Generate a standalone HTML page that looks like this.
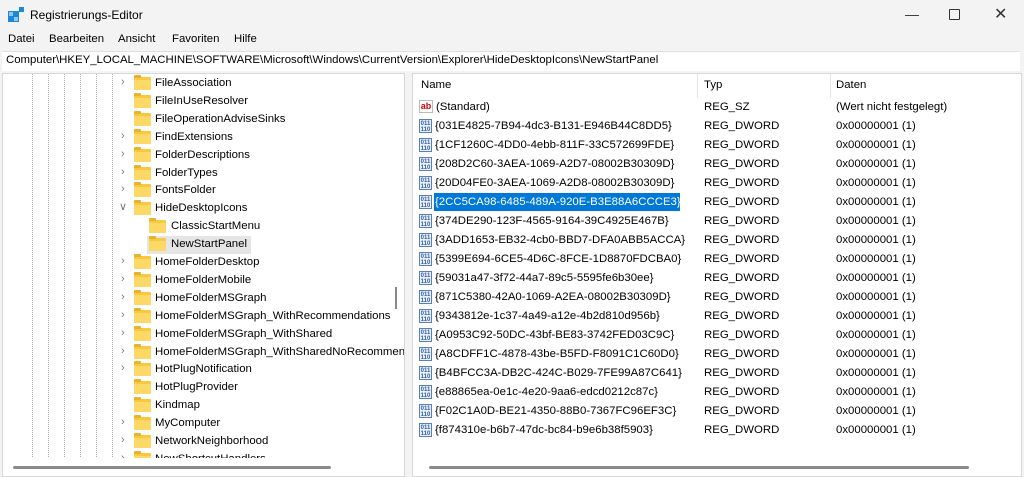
<!DOCTYPE html>
<html><head><meta charset="utf-8"><style>
*{margin:0;padding:0;box-sizing:border-box}
body{width:1024px;height:477px;overflow:hidden;background:#f3f3f3;font-family:"Segoe UI","Liberation Sans",sans-serif;font-size:11.4px;color:#000;position:relative}
.abs{position:absolute;white-space:nowrap}
.title{left:0;top:0;width:1024px;height:31px;background:#f3f3f3}
.menu span{position:absolute;top:33px}
.addr{left:2px;top:51px;width:1018px;height:20px;background:#fff;border-top:1px solid #e0e0e0;padding:2px 4px}
.lp{left:2px;top:73px;width:403px;height:404px;background:#fff;border:1px solid #d8d8d8;overflow:hidden}
.rp{left:412px;top:73px;width:610px;height:404px;background:#fff;border:1px solid #d8d8d8;overflow:hidden}
.fold{position:absolute;width:17px;height:13px;background:#f8c93e;border-radius:1px}
.fold:before{content:"";position:absolute;left:0;top:-2px;width:7px;height:3px;background:#e8b32a;border-radius:1px 1px 0 0}
.fold:after{content:"";position:absolute;left:0;top:3px;width:17px;height:10px;background:#fcd867}
.arr{position:absolute;color:#777;font-size:11px}
.row{position:absolute;height:18px;line-height:18px}
.ic{position:absolute;width:13px;height:14px;border:1px solid #5a7fb8;background:#eaf1fb;font-size:6px;line-height:6px;color:#2f5fa8;text-align:center;font-weight:bold;padding-top:1px}
.dots{position:absolute;border-left:1px dotted #aaa}
</style></head><body>
<div class="abs title"></div>
<svg class="abs" style="left:8px;top:7px" width="16" height="16"><rect x="0" y="4" width="11" height="11" fill="#1e88d8"/><g fill="#8fc8f3"><rect x="1" y="5" width="4" height="4"/><rect x="6" y="10" width="4" height="4"/></g><rect x="11" y="0" width="5" height="5" fill="#1e88d8"/></svg>
<div class="abs" style="left:30px;top:8px;font-size:12px">Registrierungs-Editor</div>
<div class="abs" style="left:905px;top:6px;font-size:14px;color:#333">&#8212;</div>
<div class="abs" style="left:949px;top:9px;width:11px;height:11px;border:1px solid #333;border-radius:1px"></div>
<div class="abs" style="left:994px;top:4px;font-size:16px;color:#333">&#x2715;</div>
<div class="menu"><span style="left:8px">Datei</span><span style="left:49px">Bearbeiten</span><span style="left:118px">Ansicht</span><span style="left:172px">Favoriten</span><span style="left:234px">Hilfe</span></div>
<div class="abs addr">Computer\HKEY_LOCAL_MACHINE\SOFTWARE\Microsoft\Windows\CurrentVersion\Explorer\HideDesktopIcons\NewStartPanel</div>
<div class="abs lp">
<div class="dots" style="left:29px;top:0;height:385px"></div>
<div class="dots" style="left:45px;top:0;height:385px"></div>
<div class="dots" style="left:61px;top:0;height:385px"></div>
<div class="dots" style="left:77px;top:0;height:385px"></div>
<div class="dots" style="left:93px;top:0;height:385px"></div>
<div class="dots" style="left:109px;top:0;height:385px"></div>
<div class="abs" style="left:144px;top:162px;width:104px;height:18px;background:#e5e5e5"></div>
<div id="tree"></div>
<div class="abs" style="left:392px;top:213px;width:2px;height:22px;background:#888"></div>
<div class="abs" style="left:0;top:384px;width:401px;height:20px;background:#fff"></div>
<div class="abs" style="left:10px;top:392px;width:318px;height:3px;background:#8a8a8a;border-radius:2px"></div>
</div>
<div class="abs rp">
<div class="abs" style="left:284px;top:0;width:1px;height:24px;background:#e5e5e5"></div>
<div class="abs" style="left:417px;top:0;width:1px;height:24px;background:#e5e5e5"></div>
<div class="abs" style="left:8px;top:5px">Name</div>
<div class="abs" style="left:291px;top:5px">Typ</div>
<div class="abs" style="left:423px;top:5px">Daten</div>
<div id="vals"></div>
<div class="abs" style="left:16px;top:392px;width:540px;height:3px;background:#8a8a8a;border-radius:2px"></div>
</div>
<script>
var t=[["FileAssociation",1,1],["FileInUseResolver",1,0],["FileOperationAdviseSinks",1,0],["FindExtensions",1,1],["FolderDescriptions",1,1],["FolderTypes",1,1],["FontsFolder",1,1],["HideDesktopIcons",1,2],["ClassicStartMenu",2,0],["NewStartPanel",2,0],["HomeFolderDesktop",1,1],["HomeFolderMobile",1,1],["HomeFolderMSGraph",1,1],["HomeFolderMSGraph_WithRecommendations",1,1],["HomeFolderMSGraph_WithShared",1,1],["HomeFolderMSGraph_WithSharedNoRecommendations",1,1],["HotPlugNotification",1,1],["HotPlugProvider",1,0],["Kindmap",1,0],["MyComputer",1,1],["NetworkNeighborhood",1,1],["NewShortcutHandlers",1,1]];
var h="";t.forEach(function(r,i){var y=i*17.9;var fx=r[1]==1?131:146;var tx=r[1]==1?152:168;
if(r[2]==1)h+='<div class="arr" style="left:118px;top:'+(y+2)+'px">&#x203A;</div>';
if(r[2]==2)h+='<div class="arr" style="left:116px;top:'+(y+1)+'px">&#x2228;</div>';
h+='<div class="fold" style="left:'+fx+'px;top:'+(y+3)+'px"></div><div class="row" style="left:'+tx+'px;top:'+y+'px">'+r[0]+'</div>';});
document.getElementById('tree').innerHTML=h;
var v=["{031E4825-7B94-4dc3-B131-E946B44C8DD5}","{1CF1260C-4DD0-4ebb-811F-33C572699FDE}","{208D2C60-3AEA-1069-A2D7-08002B30309D}","{20D04FE0-3AEA-1069-A2D8-08002B30309D}","{2CC5CA98-6485-489A-920E-B3E88A6CCCE3}","{374DE290-123F-4565-9164-39C4925E467B}","{3ADD1653-EB32-4cb0-BBD7-DFA0ABB5ACCA}","{5399E694-6CE5-4D6C-8FCE-1D8870FDCBA0}","{59031a47-3f72-44a7-89c5-5595fe6b30ee}","{871C5380-42A0-1069-A2EA-08002B30309D}","{9343812e-1c37-4a49-a12e-4b2d810d956b}","{A0953C92-50DC-43bf-BE83-3742FED03C9C}","{A8CDFF1C-4878-43be-B5FD-F8091C1C60D0}","{B4BFCC3A-DB2C-424C-B029-7FE99A87C641}","{e88865ea-0e1c-4e20-9aa6-edcd0212c87c}","{F02C1A0D-BE21-4350-88B0-7367FC96EF3C}","{f874310e-b6b7-47dc-bc84-b9e6b38f5903}"];
var s='<div class="abs" style="left:6px;top:26px;width:14px;height:13px;border:1px solid #bbb;color:#c00;font-size:9px;font-weight:bold;line-height:10px;text-align:center">ab</div><div class="row" style="left:23px;top:24px">(Standard)</div><div class="row" style="left:291px;top:24px">REG_SZ</div><div class="row" style="left:423px;top:24px">(Wert nicht festgelegt)</div>';
v.forEach(function(n,i){var y=43+i*19;
s+='<div class="ic" style="left:6px;top:'+(y+2)+'px">011<br>110</div>';
if(i==4)s+='<div class="abs" style="left:21px;top:'+y+'px;width:246px;height:18px;background:#0078d7"></div>';
s+='<div class="row" style="left:22px;top:'+y+'px;'+(i==4?'color:#fff':'')+'">'+n+'</div><div class="row" style="left:291px;top:'+y+'px">REG_DWORD</div><div class="row" style="left:423px;top:'+y+'px">0x00000001 (1)</div>';});
document.getElementById('vals').innerHTML=s;
</script>
</body></html>
